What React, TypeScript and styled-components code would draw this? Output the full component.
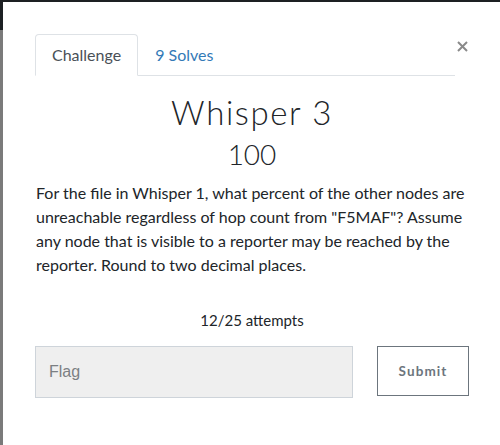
import React from 'react';
import styled, { createGlobalStyle } from 'styled-components';

const GlobalStyle = createGlobalStyle`
  html, body {
    margin: 0;
    padding: 0;
    height: 100%;
  }
  body {
    font-family: 'Lato', 'Noto Sans', sans-serif;
    background: linear-gradient(#1d2023 0, #1d2023 30px, #7a7a7a 30px);
    overflow: hidden;
  }
`;

const Page = styled.div`
  height: 445px;
  padding: 2px 0 0 3px;
  box-sizing: border-box;
  display: flex;
`;

const Modal = styled.div`
  flex: 1;
  background: #fff;
  padding: 32px 31px 0 32px;
  display: flex;
  flex-direction: column;
`;

const Header = styled.div`
  display: flex;
  align-items: flex-start;
`;

const Tabs = styled.ul`
  flex: 1;
  display: flex;
  list-style: none;
  margin: 0;
  padding: 0;
  border-bottom: 1px solid #dee2e6;
`;

const Tab = styled.li<{ active?: boolean }>`
  margin-bottom: -1px;
  padding: 9px 16px 10px;
  font-size: 16px;
  line-height: 21px;
  color: ${({ active }) => (active ? '#495057' : '#337ab7')};
  background: ${({ active }) => (active ? '#fff' : 'transparent')};
  border: 1px solid ${({ active }) => (active ? '#dee2e6' : 'transparent')};
  border-bottom-color: ${({ active }) => (active ? '#fff' : 'transparent')};
  border-radius: 4px 4px 0 0;
  cursor: pointer;
`;

const Close = styled.button`
  margin: 7px 1px 0 2px;
  padding: 0;
  width: 11px;
  height: 11px;
  border: 0;
  background: none;
  display: flex;
  cursor: pointer;
`;

const Title = styled.h2`
  margin: 17px 0 0;
  text-align: center;
  font-size: 33px;
  font-weight: 300;
  line-height: 1.2;
  letter-spacing: 1.6px;
  color: #212529;
`;

const Value = styled.h3`
  margin: 5px 0 0;
  text-align: center;
  font-size: 28px;
  font-weight: 300;
  line-height: 1.2;
  color: #212529;
`;

const Description = styled.p`
  margin: 10px 0 0;
  padding-left: 1px;
  font-size: 16px;
  line-height: 24px;
  color: #212529;
`;

const Attempts = styled.p`
  margin: 32px 0 0;
  text-align: center;
  font-size: 15px;
  line-height: 22px;
  color: #212529;
`;

const FormRow = styled.form`
  margin-top: 15px;
  display: flex;
  gap: 24px;
  align-items: flex-start;
`;

const FlagInput = styled.input`
  width: 318px;
  height: 52px;
  box-sizing: border-box;
  padding: 0 13px;
  background: #efefef;
  border: 1px solid #ced4da;
  font-family: 'Liberation Sans', Arial, sans-serif;
  font-size: 16px;
  color: #495057;
  outline: none;

  &::placeholder {
    color: #7b7f83;
  }
`;

const SubmitButton = styled.button`
  width: 92px;
  height: 50px;
  box-sizing: border-box;
  padding: 0;
  background: #fff;
  border: 1px solid #6c757d;
  border-radius: 0;
  font-family: 'Lato', sans-serif;
  font-size: 13.5px;
  font-weight: 700;
  letter-spacing: 1.1px;
  color: #6c757d;
  cursor: pointer;
`;

const App = () => {
  return (
    <>
      <GlobalStyle />
      <Page>
        <Modal>
          <Header>
            <Tabs>
              <Tab active>Challenge</Tab>
              <Tab>9 Solves</Tab>
            </Tabs>
            <Close type="button" aria-label="Close">
              <svg width="11" height="11" viewBox="0 0 11 11">
                <path d="M1 1L10 10M10 1L1 10" stroke="#8a8a8a" strokeWidth="2" />
              </svg>
            </Close>
          </Header>
          <Title>Whisper 3</Title>
          <Value>100</Value>
          <Description>
            For the file in Whisper 1, what percent of the other nodes are
            unreachable regardless of hop count from "F5MAF"? Assume any node
            that is visible to a reporter may be reached by the reporter. Round
            to two decimal places.
          </Description>
          <Attempts>12/25 attempts</Attempts>
          <FormRow onSubmit={(e) => e.preventDefault()}>
            <FlagInput placeholder="Flag" />
            <SubmitButton type="submit">Submit</SubmitButton>
          </FormRow>
        </Modal>
      </Page>
    </>
  );
};

export default App;
